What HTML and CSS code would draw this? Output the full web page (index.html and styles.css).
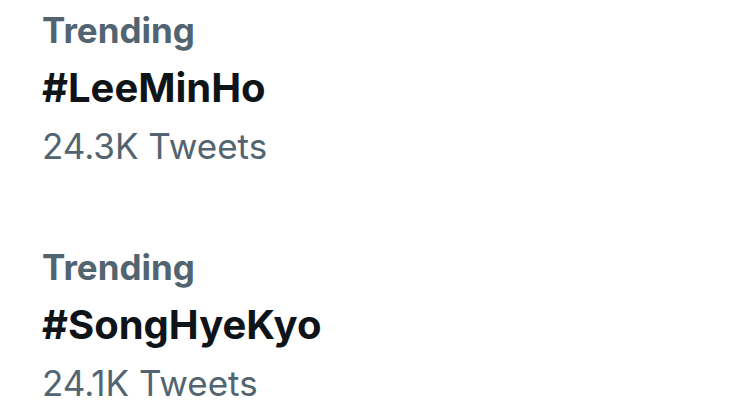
FILE: index.html
```html
<!DOCTYPE html>
<html lang="en">
<head>
    <meta charset="UTF-8">
    <meta name="viewport" content="width=device-width, initial-scale=1.0">
    <title>Trending</title>
    <link rel="stylesheet" href="styles.css">
</head>
<body>

    <!-- Lista de tendências -->
    <div class="trends">
        <div class="trend">
            <div class="trend-label">Trending</div>
            <div class="trend-tag">#LeeMinHo</div>
            <div class="trend-count">24.3K Tweets</div>
        </div>
        <div class="trend">
            <div class="trend-label">Trending</div>
            <div class="trend-tag">#SongHyeKyo</div>
            <div class="trend-count">24.1K Tweets</div>
        </div>
    </div>

</body>
</html>
```
FILE: styles.css
```css
* {
    box-sizing: border-box;
    margin: 0;
    padding: 0;
}

body {
    background-color: #ffffff;
    font-family: Inter, "Noto Sans", sans-serif;
    overflow: hidden;
}

.trends {
    display: flex;
    flex-direction: column;
    gap: 63px;
    padding: 1px 0 0 42px;
}

.trend {
    display: flex;
    flex-direction: column;
}

.trend-label {
    color: #536471;
    font-size: 35px;
    font-weight: 700;
    line-height: 58px;
}

.trend-tag {
    color: #0f1419;
    font-size: 40px;
    font-weight: 700;
    line-height: 58px;
}

.trend-count {
    color: #536471;
    font-size: 35px;
    font-weight: 400;
    line-height: 58px;
}
```
